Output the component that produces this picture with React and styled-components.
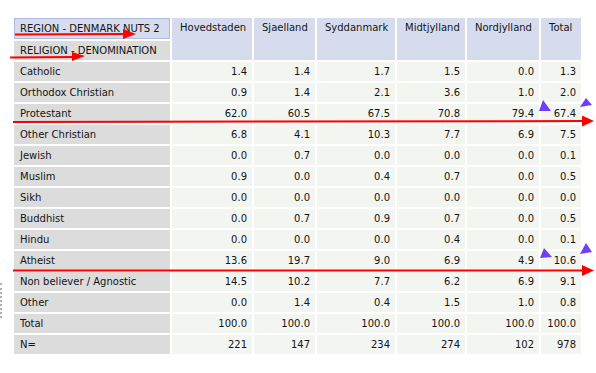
import React from "react";
import styled, { createGlobalStyle } from "styled-components";

const Global = createGlobalStyle`
  html, body { margin: 0; padding: 0; background: #fff; }
  body { font-family: "DejaVu Sans", Verdana, sans-serif; }
`;

const Page = styled.div`
  position: relative;
  width: 596px;
  height: 373px;
  padding: 16px 0 0 12px;
  box-sizing: border-box;
`;

const Table = styled.table`
  border-collapse: separate;
  border-spacing: 2px;
  table-layout: fixed;
  width: 571px;
  font-size: 10px;
  color: #141414;
`;

const HeadCell = styled.th`
  background: #d6dcee;
  font-weight: normal;
  text-align: left;
  vertical-align: top;
  padding: 4px 0 0 8px;
  line-height: 12px;
  box-sizing: border-box;
  white-space: nowrap;
  overflow: hidden;
`;

const CornerCell = styled.th`
  background: ${(p) => (p.$top ? "#d6dcee" : "#dcdcdc")};
  border: ${(p) => (p.$top ? "1px solid #adbbe0" : "none")};
  font-weight: normal;
  text-align: left;
  padding: 0 0 0 ${(p) => (p.$top ? 5 : 6)}px;
  height: ${(p) => (p.$top ? 21 : 19)}px;
  line-height: 12px;
  box-sizing: border-box;
  white-space: nowrap;
`;

const Label = styled.td`
  background: #dcdcdc;
  padding: 0 0 0 6px;
  height: 19px;
  line-height: 12px;
  box-sizing: border-box;
  white-space: nowrap;
`;

const Num = styled.td`
  background: #f3f5f1;
  text-align: right;
  padding: 0 5px 0 0;
  height: 19px;
  line-height: 12px;
  box-sizing: border-box;
  white-space: nowrap;
`;

const Overlay = styled.svg`
  position: absolute;
  left: 0;
  top: 0;
  pointer-events: none;
`;

const DottedMark = styled.div`
  position: absolute;
  left: 0;
  top: 283px;
  height: 35px;
  width: 1px;
  border-left: 2px dotted #b0b0b0;
`;

const cols = [
  ["Hovedstaden", 80],
  ["Sjaelland", 61],
  ["Syddanmark", 78],
  ["Midtjylland", 68],
  ["Nordjylland", 72],
  ["Total", 40],
];

const rows = [
  ["Catholic", "1.4", "1.4", "1.7", "1.5", "0.0", "1.3"],
  ["Orthodox Christian", "0.9", "1.4", "2.1", "3.6", "1.0", "2.0"],
  ["Protestant", "62.0", "60.5", "67.5", "70.8", "79.4", "67.4"],
  ["Other Christian", "6.8", "4.1", "10.3", "7.7", "6.9", "7.5"],
  ["Jewish", "0.0", "0.7", "0.0", "0.0", "0.0", "0.1"],
  ["Muslim", "0.9", "0.0", "0.4", "0.7", "0.0", "0.5"],
  ["Sikh", "0.0", "0.0", "0.0", "0.0", "0.0", "0.0"],
  ["Buddhist", "0.0", "0.7", "0.9", "0.7", "0.0", "0.5"],
  ["Hindu", "0.0", "0.0", "0.0", "0.4", "0.0", "0.1"],
  ["Atheist", "13.6", "19.7", "9.0", "6.9", "4.9", "10.6"],
  ["Non believer / Agnostic", "14.5", "10.2", "7.7", "6.2", "6.9", "9.1"],
  ["Other", "0.0", "1.4", "0.4", "1.5", "1.0", "0.8"],
  ["Total", "100.0", "100.0", "100.0", "100.0", "100.0", "100.0"],
  ["N=", "221", "147", "234", "274", "102", "978"],
];

const RED = "#ff0000";
const PURPLE = "#6f3ff5";

function Arrow({ x1, y1, x2, y2, head }) {
  return (
    <g>
      <line x1={x1} y1={y1} x2={x2} y2={y2} stroke={RED} strokeWidth="2" />
      <polygon points={head} fill={RED} />
    </g>
  );
}

export default function App() {
  return (
    <>
      <Global />
      <Page>
        <Table>
          <colgroup>
            <col style={{ width: 156 }} />
            {cols.map(([n, w]) => (
              <col key={n} style={{ width: w }} />
            ))}
          </colgroup>
          <thead>
            <tr>
              <CornerCell $top>REGION - DENMARK NUTS 2</CornerCell>
              {cols.map(([n]) => (
                <HeadCell key={n} rowSpan={2}>
                  {n}
                </HeadCell>
              ))}
            </tr>
            <tr>
              <CornerCell>RELIGION - DENOMINATION</CornerCell>
            </tr>
          </thead>
          <tbody>
            {rows.map((r) => (
              <tr key={r[0]}>
                <Label>{r[0]}</Label>
                {r.slice(1).map((v, i) => (
                  <Num key={i}>{v}</Num>
                ))}
              </tr>
            ))}
          </tbody>
        </Table>
        <DottedMark />
        <Overlay width="596" height="373" viewBox="0 0 596 373">
          <Arrow x1={15} y1={34.5} x2={126} y2={34} head="123,29 136,34 123,39" />
          <Arrow x1={10} y1={57.5} x2={74} y2={57} head="72,52 85,56 72,61" />
          <Arrow x1={13} y1={122} x2={583} y2={121} head="582,115.5 594,121 582,126.5" />
          <Arrow x1={13} y1={270.5} x2={583} y2={270.5} head="582,265 594,270.5 582,276" />
          <polygon points="543,100 539,111 551,111" fill={PURPLE} />
          <polygon points="586,98 580,107 592,105" fill={PURPLE} />
          <polygon points="544,248 540,258 552,257" fill={PURPLE} />
          <polygon points="586,243 580,254 592,252" fill={PURPLE} />
        </Overlay>
      </Page>
    </>
  );
}
